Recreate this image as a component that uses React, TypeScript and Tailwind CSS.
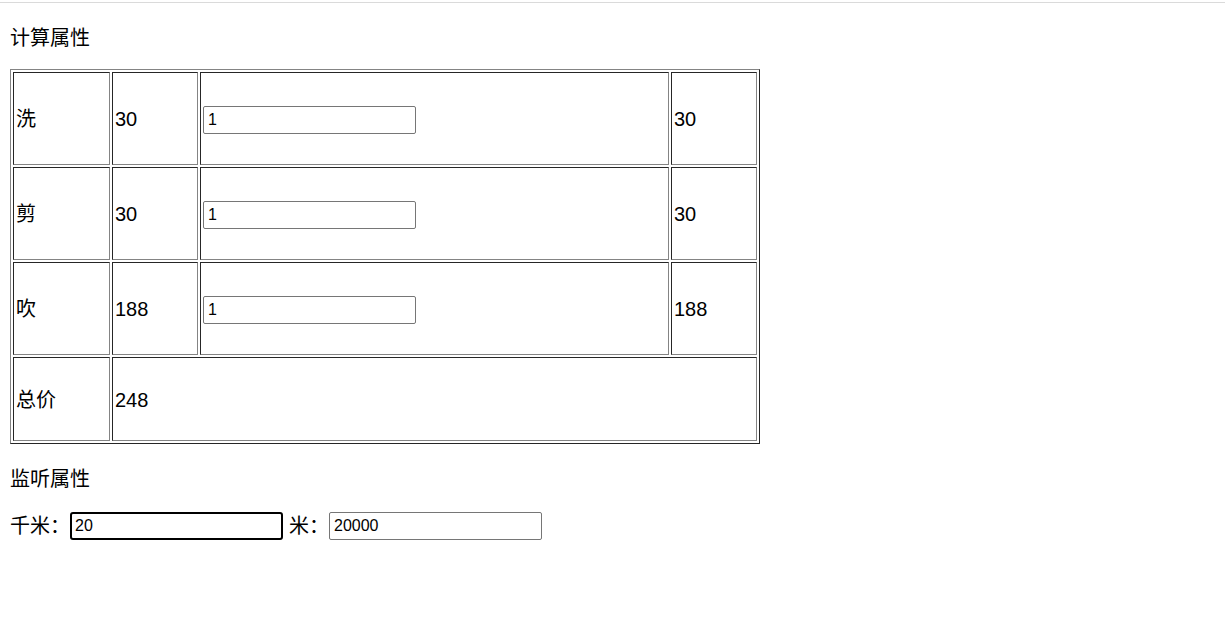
import React from "react";

const cell =
  "border border-t-[#262626] border-l-[#262626] border-r-[#848484] border-b-[#848484] px-[2px] pt-[1px] pb-0 align-middle text-left font-normal";

const inputCls =
  "w-[213px] h-[28px] border border-[#767676] rounded-[2px] px-[4px] text-[16px] leading-[20px] bg-white text-black outline-none align-middle";

const rows = [
  { name: "洗", price: "30", qty: "1", total: "30" },
  { name: "剪", price: "30", qty: "1", total: "30" },
  { name: "吹", price: "188", qty: "1", total: "188" },
];

export default function App() {
  return (
    <div
      className="bg-white text-black text-[20px] min-h-[626px]"
      style={{ fontFamily: '"Liberation Sans", "Noto Sans CJK SC", sans-serif' }}
    >
      <div className="h-[2px]" />
      <div className="h-px bg-[#dadada]" />
      <div className="px-[10px]">
        <div className="mt-[22px] leading-[26px] h-[26px]">计算属性</div>
        <table className="mt-[18px] w-[750px] table-fixed border-separate border-spacing-[2px] border border-t-[#848484] border-l-[#848484] border-r-[#262626] border-b-[#262626]">
          <colgroup>
            <col className="w-[97px]" />
            <col className="w-[86px]" />
            <col />
            <col className="w-[86px]" />
          </colgroup>
          <tbody>
            {rows.map((r) => (
              <tr key={r.name} className="h-[93px]">
                <td className={cell}>{r.name}</td>
                <td className={cell}>{r.price}</td>
                <td className={cell}>
                  <input className={inputCls} defaultValue={r.qty} />
                </td>
                <td className={cell}>{r.total}</td>
              </tr>
            ))}
            <tr className="h-[84px]">
              <td className={cell}>总价</td>
              <td className={cell} colSpan={3}>
                248
              </td>
            </tr>
          </tbody>
        </table>
        <div className="mt-[22px] leading-[26px] h-[26px]">监听属性</div>
        <div className="mt-[20px] flex items-center h-[28px]">
          <span className="w-[60px] leading-[26px]">千米：</span>
          <input
            className="w-[213px] h-[28px] border-2 border-black rounded-[3px] px-[3px] text-[16px] leading-[20px] bg-white text-black outline-none"
            defaultValue="20"
          />
          <span className="ml-[6px] w-[40px] leading-[26px]">米：</span>
          <input className={inputCls} defaultValue="20000" />
        </div>
      </div>
    </div>
  );
}
